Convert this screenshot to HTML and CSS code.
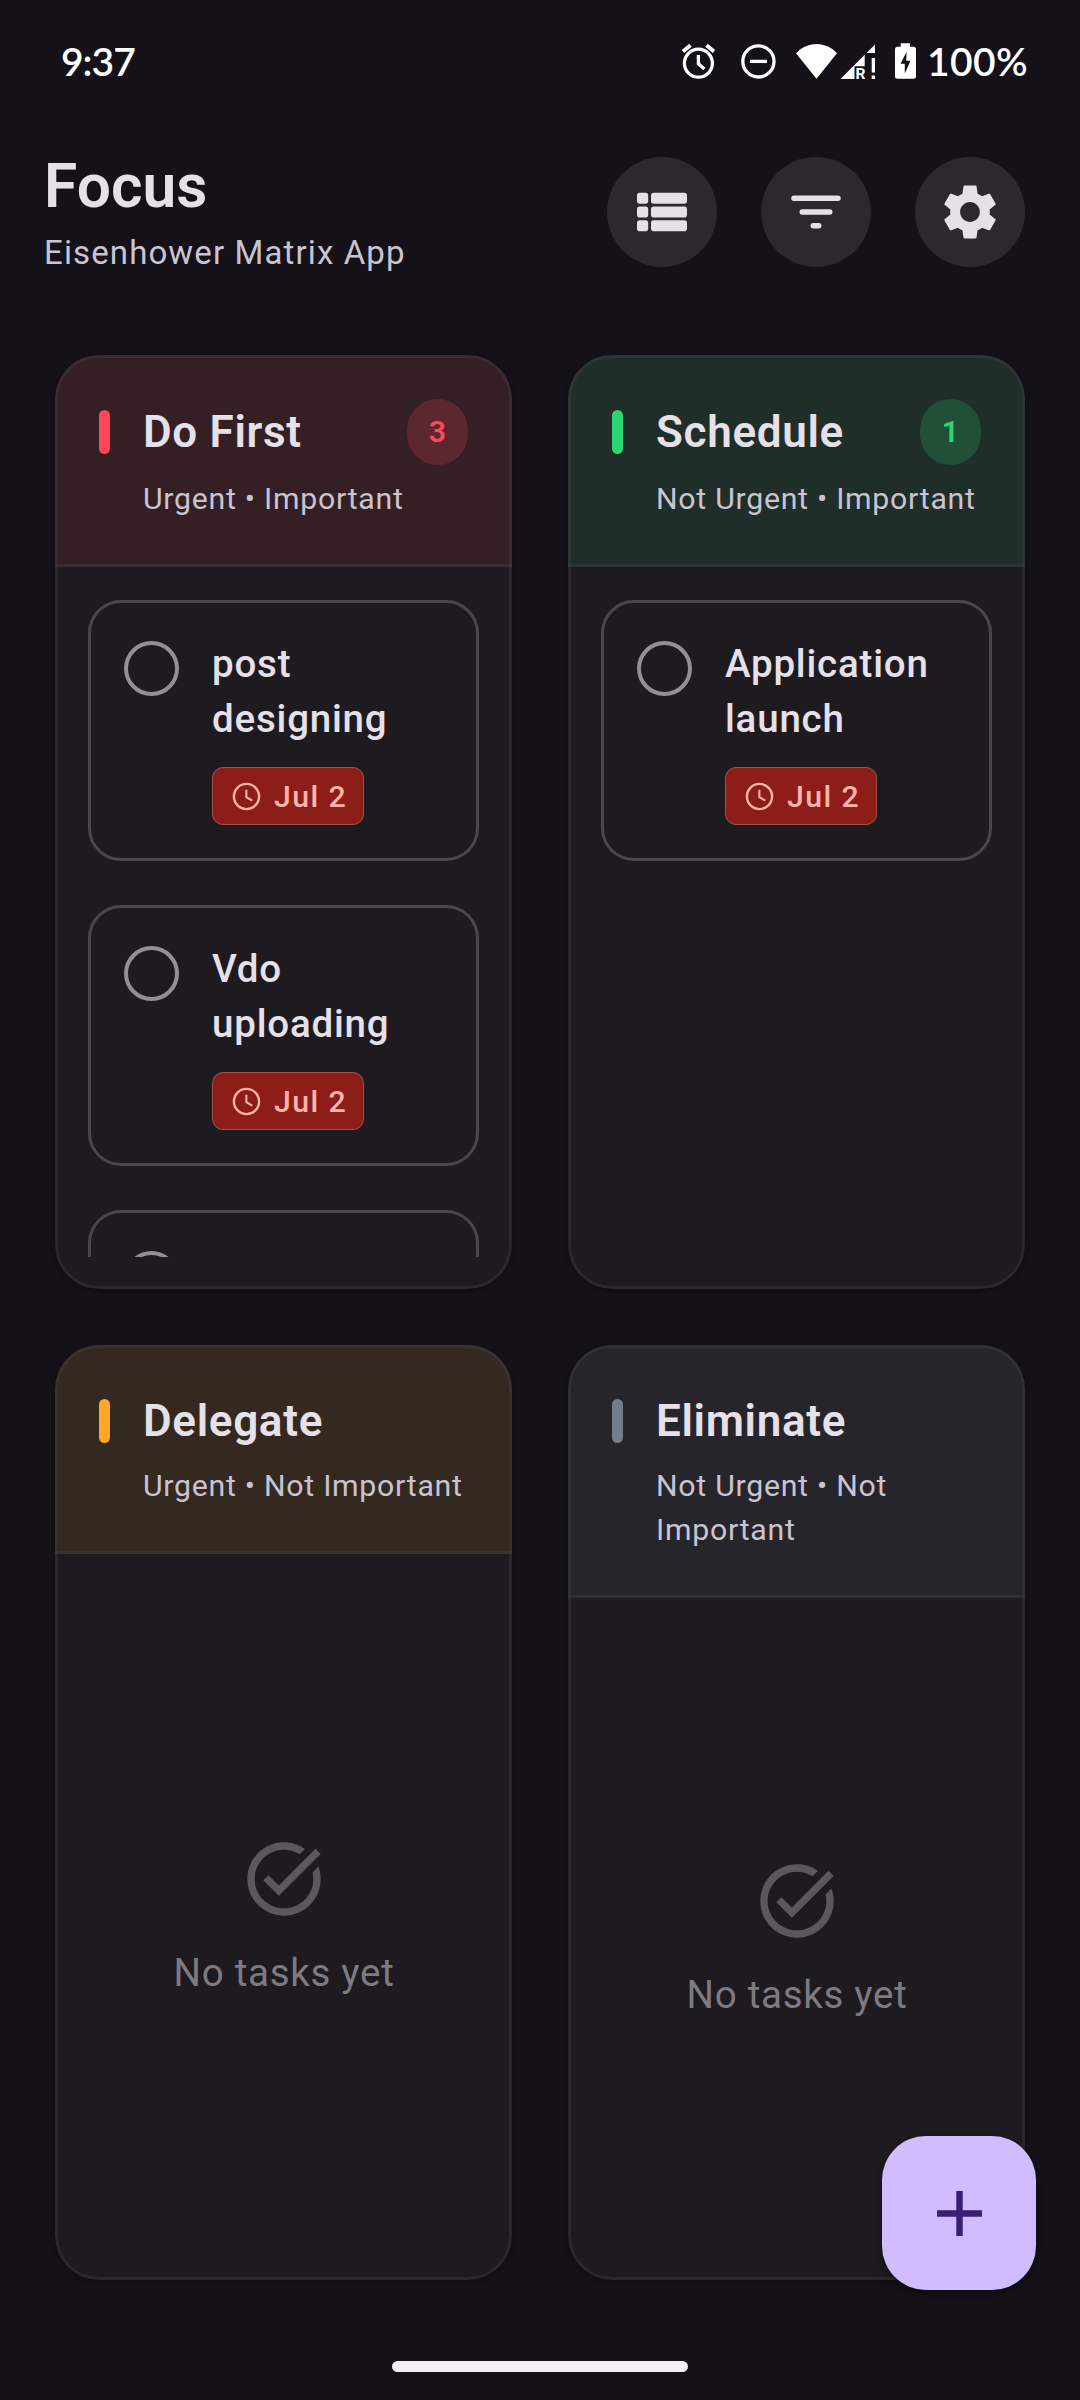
FILE: index.html
```html
<!DOCTYPE html>
<html lang="en">
<head>
<meta charset="utf-8">
<title>Focus</title>
<link rel="stylesheet" href="styles.css">
</head>
<body>
<svg class="sprite" aria-hidden="true">
  <symbol id="clock" viewBox="0 0 24 24"><g fill="none" stroke="#ffb4ab"><circle cx="12" cy="12" r="9.150" stroke-width="1.750"/><path d="M11.900 7v5.400l4.300 2.600" stroke-width="1.500"/></g></symbol>
  <symbol id="task" viewBox="0 0 24 24"><path d="M22 5.18 10.59 16.6l-4.24-4.24 1.41-1.41 2.83 2.83 10-10L22 5.18zm-2.21 5.04c.13.57.21 1.17.21 1.78 0 4.42-3.58 8-8 8s-8-3.58-8-8 3.58-8 8-8c1.58 0 3.04.46 4.28 1.25l1.44-1.44C16.1 2.67 14.13 2 12 2 6.48 2 2 6.48 2 12s4.48 10 10 10 10-4.48 10-10c0-1.19-.22-2.33-.6-3.39l-1.61 1.61z"/></symbol>
</svg>

<div class="status">
  <span class="time">9:37</span>
  <div class="status-icons">
    <svg class="alarm" viewBox="680 42 37 40" width="37" height="40"><g fill="none" stroke="#fff"><circle cx="698.4" cy="63.2" r="14" stroke-width="3.3"/><path d="M698.4 55v8.8l6 5.2" stroke-width="3.3"/><path d="m683 51.500 7.500-6.300M714 51.500l-7.500-6.300" stroke-width="3.800"/></g></svg>
    <svg class="dnd" viewBox="740 42 37 40" width="37" height="40"><circle cx="758.4" cy="61.400" r="15.600" fill="none" stroke="#fff" stroke-width="3.3"/><path d="M750 61.400h17" stroke="#fff" stroke-width="3.300"/></svg>
    <svg class="wifi" viewBox="795 42 43 40" width="43" height="40"><path fill="#fff" d="M816.500 78.800 796 53.200C801.500 47.500 808.500 44 816.500 44S831.500 47.500 837 53.200z"/></svg>
    <svg class="signal" viewBox="840 42 36 40" width="36" height="40"><g fill="#fff"><path d="M840.500 79 864.700 54.800V66.300H854.500V79zM866.500 53 875 44.500V53zM871.700 58H875v14.500h-3.300zM871.700 75.500H875V79h-3.300z"/><text class="roam" x="855.600" y="79">R</text></g></svg>
    <svg class="battery" viewBox="894 42 24 40" width="24" height="40"><path fill="#fff" d="M900.700 43.300h9.300v3.500h3.500a2.500 2.500 0 0 1 2.500 2.500v27a2.500 2.500 0 0 1-2.500 2.500h-16a2.500 2.500 0 0 1-2.500-2.500v-27a2.500 2.500 0 0 1 2.500-2.500h3.200z"/><path fill="#141218" d="m906.500 52-6 11.700h4.300V73.500l5.700-12.700h-4.200z"/></svg>
  </div>
  <span class="percent">100%</span>
</div>

<header class="top">
  <div class="brand">
    <h1>Focus</h1>
    <p>Eisenhower Matrix App</p>
  </div>
  <div class="actions">
    <button class="round" aria-label="View"><svg viewBox="0 0 66 66"><rect x="8" y="13.800" width="11.200" height="11" rx="2.800"/><rect x="22" y="13.800" width="36" height="11" rx="2.800"/><rect x="8" y="27.500" width="11.200" height="11" rx="2.800"/><rect x="22" y="27.500" width="36" height="11" rx="2.800"/><rect x="8" y="41.200" width="11.200" height="11" rx="2.800"/><rect x="22" y="41.200" width="36" height="11" rx="2.800"/></svg></button>
    <button class="round" aria-label="Filter"><svg viewBox="0 0 66 66"><rect x="8.200" y="16.500" width="49.500" height="5.500" rx="2.750"/><rect x="16.500" y="30.250" width="33" height="5.500" rx="2.750"/><rect x="27.500" y="44" width="11" height="5.500" rx="2.750"/></svg></button>
    <button class="round" aria-label="Settings"><svg viewBox="0 0 24 24"><path d="M19.140 12.940c.04-.3.06-.61.06-.94 0-.32-.02-.64-.07-.94l2.030-1.580c.18-.14.23-.41.12-.61l-1.920-3.320c-.12-.22-.37-.29-.59-.22l-2.390.96c-.5-.38-1.030-.7-1.620-.94l-.36-2.540c-.04-.24-.24-.41-.48-.41h-3.840c-.24 0-.43.17-.47.41l-.36 2.540c-.59.24-1.130.57-1.620.94l-2.390-.96c-.22-.08-.47 0-.59.22L2.740 8.870c-.12.21-.08.47.12.61l2.030 1.580c-.05.3-.09.63-.09.94s.02.64.07.94l-2.030 1.580c-.18.14-.23.41-.12.61l1.920 3.320c.12.22.37.29.59.22l2.390-.96c.5.38 1.030.7 1.620.94l.36 2.540c.05.24.24.41.48.41h3.840c.24 0 .44-.17.47-.41l.36-2.540c.59-.24 1.130-.56 1.620-.94l2.390.96c.22.08.47 0 .59-.22l1.920-3.320c.12-.22.07-.47-.12-.61l-2.010-1.580zM12 15.600c-1.980 0-3.600-1.620-3.600-3.600s1.620-3.600 3.600-3.600 3.600 1.620 3.600 3.600-1.620 3.600-3.600 3.600z"/></svg></button>
  </div>
</header>

<main class="matrix">
  <section class="quadrant first">
    <div class="head">
      <div class="title-row"><i class="bar"></i><h2>Do First</h2><span class="count">3</span></div>
      <p>Urgent • Important</p>
    </div>
    <div class="list">
      <article class="task">
        <i class="check"></i>
        <div class="info"><h3>post designing</h3><span class="due"><svg><use href="#clock"/></svg>Jul 2</span></div>
      </article>
      <article class="task">
        <i class="check"></i>
        <div class="info"><h3>Vdo uploading</h3><span class="due"><svg><use href="#clock"/></svg>Jul 2</span></div>
      </article>
      <article class="task">
        <i class="check"></i>
      </article>
    </div>
  </section>

  <section class="quadrant schedule">
    <div class="head">
      <div class="title-row"><i class="bar"></i><h2>Schedule</h2><span class="count">1</span></div>
      <p>Not Urgent • Important</p>
    </div>
    <div class="list">
      <article class="task">
        <i class="check"></i>
        <div class="info"><h3>Application launch</h3><span class="due"><svg><use href="#clock"/></svg>Jul 2</span></div>
      </article>
    </div>
  </section>

  <section class="quadrant delegate">
    <div class="head">
      <div class="title-row"><i class="bar"></i><h2>Delegate</h2></div>
      <p>Urgent • Not Important</p>
    </div>
    <div class="empty"><svg><use href="#task"/></svg><p>No tasks yet</p></div>
  </section>

  <section class="quadrant eliminate">
    <div class="head">
      <div class="title-row"><i class="bar"></i><h2>Eliminate</h2></div>
      <p>Not Urgent • Not Important</p>
    </div>
    <div class="empty"><svg><use href="#task"/></svg><p>No tasks yet</p></div>
  </section>
</main>

<footer class="gesture"><i></i></footer>

<button class="fab" aria-label="Add task"><svg viewBox="0 0 24 24"><path d="M19 13h-6v6h-2v-6H5v-2h6V5h2v6h6v2z"/></svg></button>
</body>
</html>
```
FILE: styles.css
```css
* { box-sizing: border-box; margin: 0; padding: 0; }

body {
  position: relative;
  display: flex;
  flex-direction: column;
  width: 1080px;
  height: 2400px;
  overflow: hidden;
  background: #141218;
  color: #e6e0e9;
  font-family: Roboto, "Liberation Sans", sans-serif;
}

button { border: 0; font: inherit; }
h1, h2, h3 { font-weight: 600; }
.sprite { display: none; }

/* System status bar */
.status {
  display: flex;
  align-items: flex-start;
  height: 150px;
  padding: 42px 0 0 61px;
  color: #fff;
  font-family: Lato, "Open Sans", sans-serif;
  font-weight: 600;
  line-height: 38px;
}
.time { width: 619px; font-size: 39px; letter-spacing: -1px; }
.status-icons { display: flex; width: 247px; }
.status-icons svg { flex: none; display: block; }
.dnd { margin-left: 23px; }
.wifi { margin-left: 18px; }
.signal { margin-left: 2px; }
.battery { margin-left: 18px; }
.roam { font: 700 15.5px Roboto, sans-serif; }
.percent { font-size: 39px; letter-spacing: .4px; }

/* App header */
.top {
  display: flex;
  justify-content: space-between;
  align-items: flex-start;
  height: 205px;
  padding: 0 55px 0 44px;
}
.brand { padding-top: 1px; }
.brand h1 { font-size: 60.5px; line-height: 72px; }
.brand p {
  margin-top: 8px;
  color: #cac4d0;
  font-size: 33px;
  line-height: 44px;
  letter-spacing: 1.12px;
}
.actions { display: flex; gap: 44px; padding-top: 7px; }
.round {
  display: grid;
  place-items: center;
  width: 110px;
  height: 110px;
  border-radius: 50%;
  background: #2b292e;
}
.round svg { width: 66px; height: 66px; fill: #e6e0e9; }

/* Matrix */
.matrix {
  display: grid;
  grid-template-columns: 457px 457px;
  grid-template-rows: 934px 935px;
  gap: 56px;
  padding: 0 55px;
}
.quadrant {
  position: relative;
  display: flex;
  flex-direction: column;
  min-width: 0;
  overflow: hidden;
  border-radius: 44px;
  background: #1d1b20;
  box-shadow: 0 2px 6px rgba(0, 0, 0, .35);
}
.quadrant::after {
  content: "";
  position: absolute;
  inset: 0;
  border: 3px solid rgba(73, 69, 79, .3);
  border-radius: 44px;
}
.head {
  padding: 44px 44px 43px;
  border-bottom: 3px solid rgba(73, 69, 79, .3);
}
.title-row { display: flex; align-items: center; min-height: 62px; }
.bar { width: 11px; height: 44px; margin-right: 33px; border-radius: 5.5px; }
.title-row h2 { flex: 1; font-size: 44px; line-height: 60px; letter-spacing: .68px; }
.count {
  height: 66px;
  padding: 0 22px;
  border-radius: 33px;
  font-size: 30.25px;
  font-weight: 600;
  line-height: 66px;
}
.head p {
  margin-top: 12px;
  padding-left: 44px;
  color: #cac4d0;
  font-size: 30.25px;
  line-height: 44px;
  letter-spacing: .73px;
}
.first .head { background: #341f25; }
.first .bar { background: #ff4757; }
.first .count { background: #5d272f; color: #ff4757; }
.schedule .head { background: #1f2e28; }
.schedule .bar { background: #2ed573; }
.schedule .count { background: #224f37; color: #2ed573; }
.delegate .head { background: #342921; }
.delegate .bar { background: #ffa726; }
.eliminate .head { background: #26252b; }
.eliminate .bar { background: #747d8c; }

.delegate .title-row,
.eliminate .title-row { min-height: 63px; }

/* Task cards */
.list {
  flex: 1;
  display: flex;
  flex-direction: column;
  gap: 44px;
  min-height: 0;
  margin: 33px 33px 32px;
  overflow: hidden;
}
.task {
  flex: none;
  display: flex;
  align-items: flex-start;
  gap: 33px;
  height: 261px;
  padding: 33px;
  border: 3px solid #49474c;
  border-radius: 33px;
}
.check {
  flex: none;
  width: 55px;
  height: 55px;
  margin-top: 5px;
  border: 4px solid #929096;
  border-radius: 50%;
}
.info { flex: 1; min-width: 0; }
.info h3 {
  font-size: 38.5px;
  font-weight: 500;
  line-height: 55px;
  letter-spacing: .8px;
}
.due {
  display: flex;
  align-items: center;
  width: fit-content;
  height: 58px;
  margin-top: 21px;
  padding: 0 16px 0 17px;
  border: 1px solid #a0544e;
  border-radius: 11px;
  background: #8c1d18;
  color: #ffb4ab;
  font-size: 30.25px;
  font-weight: 500;
  letter-spacing: 1.4px;
}
.due svg { width: 33px; height: 33px; margin-right: 11px; }

.empty {
  flex: 1;
  display: flex;
  flex-direction: column;
  align-items: center;
  justify-content: center;
  gap: 22px;
}
.empty svg { width: 88px; height: 88px; fill: #5a585d; }
.empty p { padding-left: 1px; color: #7d7a82; font-size: 38.5px; line-height: 55px; letter-spacing: .73px; }

/* Gesture bar */
.gesture { display: flex; justify-content: center; padding-top: 81px; }
.gesture i { width: 296px; height: 11px; border-radius: 6px; background: #f3eff4; }

.fab {
  position: absolute;
  right: 44px;
  bottom: 110px;
  display: grid;
  place-items: center;
  width: 154px;
  height: 154px;
  border-radius: 44px;
  background: #d0bcff;
  box-shadow: 0 4px 10px rgba(0, 0, 0, .4);
}
.fab svg { width: 77px; height: 77px; fill: #381e72; }
```
